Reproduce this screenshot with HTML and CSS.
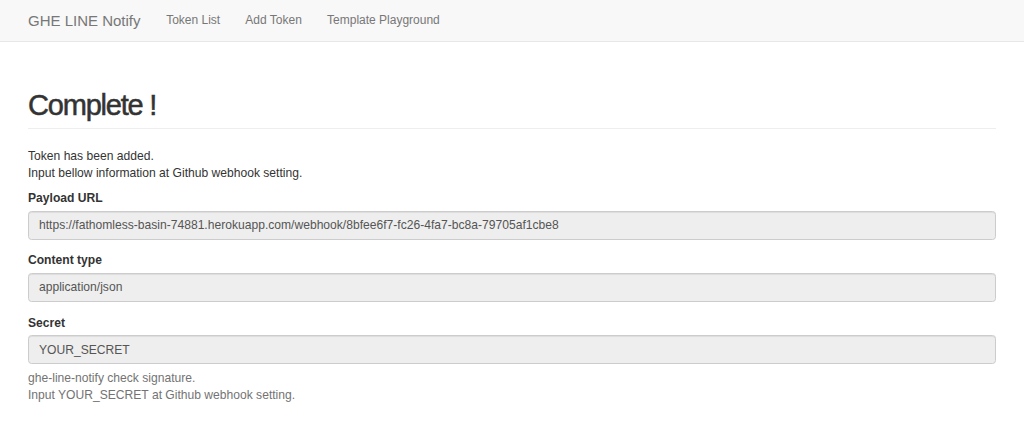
FILE: index.html
```html
<!DOCTYPE html>
<html lang="en">
<head>
    <meta charset="UTF-8">
    <title>GHE LINE Notify</title>
    <link rel="stylesheet" href="styles.css">
</head>
<body>
    <nav class="navbar">
        <a class="brand" href="#">GHE LINE Notify</a>
        <ul class="nav">
            <li><a href="#">Token List</a></li>
            <li><a href="#">Add Token</a></li>
            <li><a href="#">Template Playground</a></li>
        </ul>
    </nav>

    <div class="container">
        <div class="page-header">
            <h1>Complete !</h1>
        </div>

        <p>Token has been added.<br>Input bellow information at Github webhook setting.</p>

        <div class="form-group">
            <label>Payload URL</label>
            <input class="form-control" type="text" value="https://fathomless-basin-74881.herokuapp.com/webhook/8bfee6f7-fc26-4fa7-bc8a-79705af1cbe8" readonly>
        </div>
        <div class="form-group">
            <label>Content type</label>
            <input class="form-control" type="text" value="application/json" readonly>
        </div>
        <div class="form-group">
            <label>Secret</label>
            <input class="form-control" type="text" value="YOUR_SECRET" readonly>
            <p class="help-block">ghe-line-notify check signature.<br>Input YOUR_SECRET at Github webhook setting.</p>
        </div>
    </div>
</body>
</html>
```

FILE: styles.css
```css
* {box-sizing: border-box}
body {margin: 0; font-family: "Liberation Sans", Arial, sans-serif; font-size: 12.1px; line-height: 16.6px; color: #333; background: #fff}
a {text-decoration: none}
.navbar {display: flex; align-items: center; height: 42px; background: #f8f8f8; border-bottom: 1px solid #e7e7e7; padding: 0 15px}
.brand {color: #777; font-size: 15px; padding: 0 13px; line-height: 41px}
.nav {display: flex; list-style: none; margin: 0; padding: 0}
.nav a {display: block; color: #777; padding: 0 12.6px; line-height: 41px; font-size: 12px}
.container {padding: 0 28px}
.page-header {margin-top: 47px; padding-bottom: 6px; border-bottom: 1px solid #eee; margin-bottom: 19px}
h1 {margin: 0; font-size: 29px; font-weight: 500; line-height: 33px; color: #333; letter-spacing: -1.2px; -webkit-text-stroke: 0.5px #333}
p {margin: 0 0 9px}
.form-group {margin-bottom: 12.6px}
label {display: block; font-weight: bold; margin-bottom: 4px}
.form-control {display: block; width: 100%; height: 29px; padding: 0 10px; font-family: inherit; font-size: 12.1px; color: #555; background: #eee; border: 1px solid #ccc; border-radius: 3.5px; box-shadow: inset 0 1px 1px rgba(0,0,0,0.075); outline: none}
.help-block {margin-top: 6px; line-height: 17px; color: #737373}
```
